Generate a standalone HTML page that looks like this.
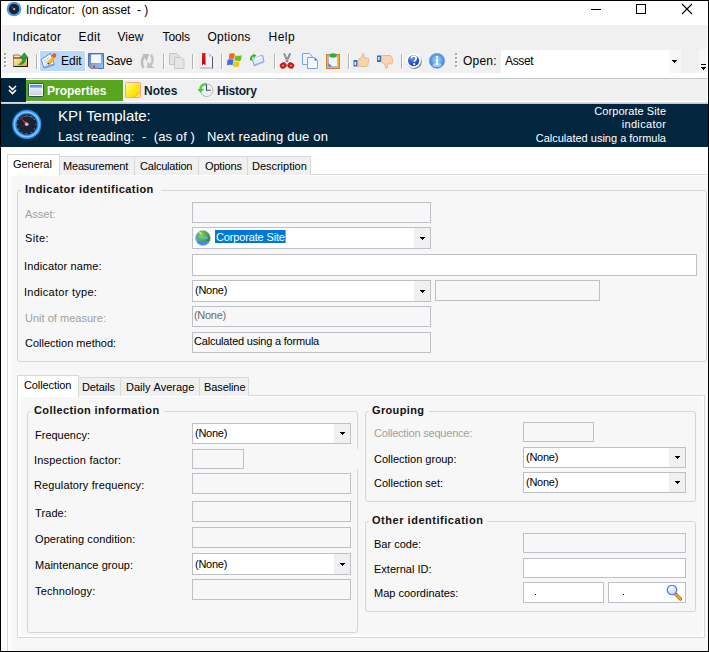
<!DOCTYPE html>
<html><head><meta charset="utf-8"><style>
html,body{margin:0;padding:0;}
body{width:709px;height:652px;overflow:hidden;position:relative;background:#000;font-family:"Liberation Sans",sans-serif;}
.t{position:absolute;white-space:pre;line-height:1;}
.r{position:absolute;box-sizing:border-box;}
svg.r{overflow:visible}
</style></head><body>
<div class="r" style="left:1px;top:1px;width:707px;height:650px;background:#fff;"></div>
<div class="r" style="left:2px;top:25px;width:705px;height:48px;background:#f0f0f0;"></div>
<svg class="r" style="left:6px;top:1px" width="16" height="16" viewBox="0 0 16 16"><circle cx="8" cy="8" r="7.3" fill="#3b9be8"/><circle cx="8" cy="8" r="6" fill="#8fd0ff" opacity=".5"/><circle cx="8" cy="8" r="5.4" fill="#1b2233"/><path d="M4.5 4.8 L8.6 7.6 L7.6 8.6 Z" fill="#e02020"/><circle cx="8.2" cy="8.2" r="1.1" fill="#aab8c8"/></svg>
<div class="t" style="left:26px;top:4.00px;font-size:12px;letter-spacing:-0.05px;">Indicator:&nbsp;&nbsp;(on&nbsp;asset&nbsp;&nbsp;-&nbsp;)</div>
<div class="r" style="left:591px;top:9px;width:10px;height:1px;background:#000;"></div>
<div class="r" style="left:636px;top:4px;width:10px;height:10px;border:1px solid #000;box-sizing:border-box;"></div>
<svg class="r" style="left:681px;top:3px" width="12" height="12" viewBox="0 0 12 12"><path d="M1 1L11 11M11 1L1 11" stroke="#000" stroke-width="1.1"/></svg>
<div class="t" style="left:12.5px;top:31.00px;font-size:12px;letter-spacing:0.3px;">Indicator</div>
<div class="t" style="left:78.5px;top:31.00px;font-size:12px;letter-spacing:0.4px;">Edit</div>
<div class="t" style="left:117.5px;top:31.00px;font-size:12px;">View</div>
<div class="t" style="left:162.5px;top:31.00px;font-size:12px;letter-spacing:-0.1px;">Tools</div>
<div class="t" style="left:207.5px;top:31.00px;font-size:12px;letter-spacing:0.25px;">Options</div>
<div class="t" style="left:268.5px;top:31.00px;font-size:12px;letter-spacing:0.5px;">Help</div>
<div class="r" style="left:5px;top:54px;width:2px;height:2px;background:#fff;"></div>
<div class="r" style="left:4px;top:53px;width:2px;height:2px;background:#a4a4a4;"></div>
<div class="r" style="left:5px;top:58px;width:2px;height:2px;background:#fff;"></div>
<div class="r" style="left:4px;top:57px;width:2px;height:2px;background:#a4a4a4;"></div>
<div class="r" style="left:5px;top:62px;width:2px;height:2px;background:#fff;"></div>
<div class="r" style="left:4px;top:61px;width:2px;height:2px;background:#a4a4a4;"></div>
<div class="r" style="left:5px;top:66px;width:2px;height:2px;background:#fff;"></div>
<div class="r" style="left:4px;top:65px;width:2px;height:2px;background:#a4a4a4;"></div>
<div class="r" style="left:36px;top:54px;width:1px;height:15px;background:#b2b2b2;"></div>
<div class="r" style="left:37px;top:55px;width:1px;height:15px;background:#fff;"></div>
<div class="r" style="left:163px;top:54px;width:1px;height:15px;background:#b2b2b2;"></div>
<div class="r" style="left:164px;top:55px;width:1px;height:15px;background:#fff;"></div>
<div class="r" style="left:192px;top:54px;width:1px;height:15px;background:#b2b2b2;"></div>
<div class="r" style="left:193px;top:55px;width:1px;height:15px;background:#fff;"></div>
<div class="r" style="left:221px;top:54px;width:1px;height:15px;background:#b2b2b2;"></div>
<div class="r" style="left:222px;top:55px;width:1px;height:15px;background:#fff;"></div>
<div class="r" style="left:274px;top:54px;width:1px;height:15px;background:#b2b2b2;"></div>
<div class="r" style="left:275px;top:55px;width:1px;height:15px;background:#fff;"></div>
<div class="r" style="left:348px;top:54px;width:1px;height:15px;background:#b2b2b2;"></div>
<div class="r" style="left:349px;top:55px;width:1px;height:15px;background:#fff;"></div>
<div class="r" style="left:401px;top:54px;width:1px;height:15px;background:#b2b2b2;"></div>
<div class="r" style="left:402px;top:55px;width:1px;height:15px;background:#fff;"></div>
<div class="r" style="left:456px;top:54px;width:2px;height:2px;background:#fff;"></div>
<div class="r" style="left:455px;top:53px;width:2px;height:2px;background:#a8a8a8;"></div>
<div class="r" style="left:456px;top:58px;width:2px;height:2px;background:#fff;"></div>
<div class="r" style="left:455px;top:57px;width:2px;height:2px;background:#a8a8a8;"></div>
<div class="r" style="left:456px;top:62px;width:2px;height:2px;background:#fff;"></div>
<div class="r" style="left:455px;top:61px;width:2px;height:2px;background:#a8a8a8;"></div>
<div class="r" style="left:456px;top:66px;width:2px;height:2px;background:#fff;"></div>
<div class="r" style="left:455px;top:65px;width:2px;height:2px;background:#a8a8a8;"></div>
<div class="r" style="left:39px;top:50px;width:47px;height:22px;background:#bad8f9;border:1px solid #fdfdff;"></div>
<div class="t" style="left:61px;top:55.00px;font-size:12px;">Edit</div>
<div class="t" style="left:106px;top:55.00px;font-size:12px;letter-spacing:-0.35px;">Save</div>
<div class="t" style="left:463px;top:55.00px;font-size:12px;letter-spacing:0.2px;">Open:</div>
<div class="r" style="left:501px;top:50px;width:168px;height:23px;background:#fff;"></div>
<div class="r" style="left:669px;top:50px;width:12px;height:23px;background:#f7f7f7;"></div>
<div class="r" style="left:672px;top:60px;width:5px;height:1px;background:#000;"></div>
<div class="r" style="left:673px;top:61px;width:3px;height:1px;background:#000;"></div>
<div class="r" style="left:674px;top:62px;width:1px;height:1px;background:#000;"></div>
<div class="t" style="left:505px;top:55.00px;font-size:12px;letter-spacing:-0.35px;">Asset</div>
<div class="r" style="left:699px;top:49px;width:8px;height:24px;background:#f7f7f7;"></div>
<div class="r" style="left:701px;top:64px;width:5px;height:1px;background:#000;"></div>
<div class="r" style="left:701px;top:67px;width:5px;height:1px;background:#000;"></div>
<div class="r" style="left:702px;top:68px;width:3px;height:1px;background:#000;"></div>
<div class="r" style="left:703px;top:69px;width:1px;height:1px;background:#000;"></div>
<div class="r" style="left:1px;top:78px;width:25px;height:24px;background:#03263f;"></div>
<div class="r" style="left:26px;top:78px;width:682px;height:1px;background:#c4cace;"></div>
<div class="r" style="left:26px;top:79px;width:681px;height:22px;background:#f0f0f0;"></div>
<div class="r" style="left:26px;top:79px;width:248px;height:1px;background:#fff;"></div>
<div class="r" style="left:26px;top:80px;width:97px;height:21px;background:#58a61e;"></div>
<div class="r" style="left:123px;top:80px;width:1px;height:21px;background:#fafafa;"></div>
<div class="r" style="left:26px;top:101px;width:682px;height:1px;background:#fff;"></div>
<div class="r" style="left:1px;top:102px;width:707px;height:1px;background:#d6dce1;"></div>
<div class="r" style="left:1px;top:103px;width:707px;height:1px;background:#c2cad1;"></div>
<div class="t" style="left:47px;top:85.00px;font-size:12px;font-weight:bold;color:#fff;">Properties</div>
<div class="t" style="left:144px;top:85.00px;font-size:12px;font-weight:bold;color:#0a1f3a;">Notes</div>
<div class="t" style="left:217px;top:85.00px;font-size:12px;font-weight:bold;color:#0a1f3a;letter-spacing:-0.25px;">History</div>
<div class="r" style="left:1px;top:104px;width:707px;height:43px;background:#03263f;"></div>
<div class="t" style="left:58px;top:108.00px;font-size:15px;color:#fff;letter-spacing:-0.05px;">KPI&nbsp;Template:</div>
<div class="t" style="left:58px;top:130.00px;font-size:13px;color:#fff;letter-spacing:0.1px;">Last&nbsp;reading:&nbsp;&nbsp;-&nbsp;&nbsp;(as&nbsp;of&nbsp;)</div>
<div class="t" style="left:207px;top:130.00px;font-size:13px;color:#fff;letter-spacing:0.22px;">Next&nbsp;reading&nbsp;due&nbsp;on</div>
<div class="t" style="right:42.94px;top:106px;font-size:11px;color:#fff;text-align:right;letter-spacing:0.06px">Corporate Site</div>
<div class="t" style="right:42.65px;top:119px;font-size:11px;color:#fff;text-align:right;letter-spacing:0.35px">indicator</div>
<div class="t" style="right:43.00px;top:133px;font-size:11px;color:#fff;text-align:right;letter-spacing:0.0px">Calculated using a formula</div>
<div class="r" style="left:7px;top:174px;width:701px;height:1px;background:#d9d9d9;"></div>
<div class="r" style="left:7px;top:174px;width:1px;height:477px;background:#d9d9d9;"></div>
<div class="r" style="left:11px;top:176px;width:697px;height:475px;background:#f7f7f7;"></div>
<div class="r" style="left:59px;top:156px;width:76px;height:19px;background:#f0f0f0;box-shadow: inset 0 1px 0 #d9d9d9, inset -1px 0 0 #d9d9d9, inset 1px 0 0 #d9d9d9;"></div>
<div class="t" style="left:63px;top:161.00px;font-size:11px;letter-spacing:-0.2px;">Measurement</div>
<div class="r" style="left:134px;top:156px;width:65px;height:19px;background:#f0f0f0;box-shadow: inset 0 1px 0 #d9d9d9, inset -1px 0 0 #d9d9d9, inset 1px 0 0 #d9d9d9;"></div>
<div class="t" style="left:140px;top:161.00px;font-size:11px;letter-spacing:-0.2px;">Calculation</div>
<div class="r" style="left:198px;top:156px;width:50px;height:19px;background:#f0f0f0;box-shadow: inset 0 1px 0 #d9d9d9, inset -1px 0 0 #d9d9d9, inset 1px 0 0 #d9d9d9;"></div>
<div class="t" style="left:205px;top:161.00px;font-size:11px;letter-spacing:-0.15px;">Options</div>
<div class="r" style="left:247px;top:156px;width:64px;height:19px;background:#f0f0f0;box-shadow: inset 0 1px 0 #d9d9d9, inset -1px 0 0 #d9d9d9, inset 1px 0 0 #d9d9d9;"></div>
<div class="t" style="left:252px;top:161.00px;font-size:11px;letter-spacing:-0.02px;">Description</div>
<div class="r" style="left:7px;top:154px;width:53px;height:22px;background:#fff;box-shadow: inset 0 1px 0 #d9d9d9, inset -1px 0 0 #d9d9d9, inset 1px 0 0 #d9d9d9;"></div>
<div class="t" style="left:13px;top:159.00px;font-size:11px;letter-spacing:-0.05px;">General</div>
<div class="r" style="left:17px;top:190px;width:690px;height:172px;box-sizing:border-box;border:1px solid #cfd6dc;border-radius:3px"></div>
<div class="r" style="left:21px;top:190px;width:140px;height:1px;background:#f7f7f7;"></div>
<div class="t" style="left:25px;top:184.00px;font-size:11px;font-weight:bold;color:#111;letter-spacing:0.45px;">Indicator&nbsp;identification</div>
<div class="t" style="left:25px;top:209.00px;font-size:11px;color:#a0a0a0;">Asset:</div>
<div class="t" style="left:25px;top:233.00px;font-size:11px;letter-spacing:0.4px;">Site:</div>
<div class="t" style="left:24px;top:261.00px;font-size:11px;letter-spacing:0.13px;">Indicator&nbsp;name:</div>
<div class="t" style="left:24px;top:287.00px;font-size:11px;letter-spacing:0.27px;">Indicator&nbsp;type:</div>
<div class="t" style="left:25px;top:313.00px;font-size:11px;color:#a0a0a0;letter-spacing:0.02px;">Unit&nbsp;of&nbsp;measure:</div>
<div class="t" style="left:25px;top:338.00px;font-size:11px;">Collection&nbsp;method:</div>
<div class="r" style="left:192px;top:202px;width:239px;height:21px;background:#f7f7f7;box-sizing:border-box;border:1px solid #bdc0c6;"></div>
<div class="r" style="left:192px;top:227px;width:239px;height:22px;background:#fff;box-sizing:border-box;border:1px solid #bdc0c6;"></div>
<div class="r" style="left:414px;top:228px;width:16px;height:20px;background:#f0f0f0;"></div>
<div class="r" style="left:420px;top:237px;width:5px;height:1px;background:#000;"></div>
<div class="r" style="left:421px;top:238px;width:3px;height:1px;background:#000;"></div>
<div class="r" style="left:422px;top:239px;width:1px;height:1px;background:#000;"></div>
<div class="r" style="left:215px;top:230px;width:70px;height:13px;background:#0078d7;"></div>
<div class="r" style="left:285px;top:230px;width:1px;height:13px;background:#ff8c1a;"></div>
<div class="t" style="left:216px;top:232.00px;font-size:11px;color:#fff;letter-spacing:-0.15px;">Corporate&nbsp;Site</div>
<div class="r" style="left:192px;top:254px;width:505px;height:22px;background:#fff;box-sizing:border-box;border:1px solid #bdc0c6;"></div>
<div class="r" style="left:192px;top:280px;width:239px;height:22px;background:#fff;box-sizing:border-box;border:1px solid #bdc0c6;"></div>
<div class="r" style="left:414px;top:281px;width:16px;height:20px;background:#f0f0f0;"></div>
<div class="r" style="left:420px;top:290px;width:5px;height:1px;background:#000;"></div>
<div class="r" style="left:421px;top:291px;width:3px;height:1px;background:#000;"></div>
<div class="r" style="left:422px;top:292px;width:1px;height:1px;background:#000;"></div>
<div class="t" style="left:195px;top:285.00px;font-size:11px;letter-spacing:-0.25px;">(None)</div>
<div class="r" style="left:435px;top:280px;width:165px;height:21px;background:#f7f7f7;box-sizing:border-box;border:1px solid #bdc0c6;"></div>
<div class="r" style="left:192px;top:306px;width:239px;height:21px;background:#f7f7f7;box-sizing:border-box;border:1px solid #bdc0c6;"></div>
<div class="t" style="left:194px;top:310.00px;font-size:11px;color:#6d6d6d;letter-spacing:-0.3px;">(None)</div>
<div class="r" style="left:192px;top:332px;width:239px;height:21px;background:#f7f7f7;box-sizing:border-box;border:1px solid #bdc0c6;"></div>
<div class="t" style="left:194px;top:336.00px;font-size:11px;letter-spacing:-0.2px;">Calculated&nbsp;using&nbsp;a&nbsp;formula</div>
<div class="r" style="left:17px;top:395px;width:688px;height:1px;background:#d9d9d9;"></div>
<div class="r" style="left:17px;top:395px;width:1px;height:243px;background:#d9d9d9;"></div>
<div class="r" style="left:704px;top:395px;width:1px;height:243px;background:#d9d9d9;"></div>
<div class="r" style="left:17px;top:637px;width:688px;height:1px;background:#d9d9d9;"></div>
<div class="r" style="left:18px;top:396px;width:686px;height:241px;background:#fff;"></div>
<div class="r" style="left:21px;top:397px;width:682px;height:238px;background:#f7f7f7;"></div>
<div class="r" style="left:78px;top:377px;width:43px;height:19px;background:#f0f0f0;box-shadow: inset 0 1px 0 #d9d9d9, inset -1px 0 0 #d9d9d9, inset 1px 0 0 #d9d9d9;"></div>
<div class="t" style="left:82px;top:382.00px;font-size:11px;letter-spacing:-0.1px;">Details</div>
<div class="r" style="left:120px;top:377px;width:80px;height:19px;background:#f0f0f0;box-shadow: inset 0 1px 0 #d9d9d9, inset -1px 0 0 #d9d9d9, inset 1px 0 0 #d9d9d9;"></div>
<div class="t" style="left:126px;top:382.00px;font-size:11px;">Daily&nbsp;Average</div>
<div class="r" style="left:199px;top:377px;width:50px;height:19px;background:#f0f0f0;box-shadow: inset 0 1px 0 #d9d9d9, inset -1px 0 0 #d9d9d9, inset 1px 0 0 #d9d9d9;"></div>
<div class="t" style="left:204px;top:382.00px;font-size:11px;letter-spacing:-0.1px;">Baseline</div>
<div class="r" style="left:17px;top:375px;width:62px;height:22px;background:#fff;box-shadow: inset 0 1px 0 #d9d9d9, inset -1px 0 0 #d9d9d9, inset 1px 0 0 #d9d9d9;"></div>
<div class="t" style="left:24px;top:380.00px;font-size:11px;letter-spacing:-0.1px;">Collection</div>
<div class="r" style="left:27px;top:411px;width:331px;height:222px;box-sizing:border-box;border:1px solid #cfd6dc;border-radius:3px"></div>
<div class="r" style="left:31px;top:411px;width:133px;height:1px;background:#f7f7f7;"></div>
<div class="t" style="left:34px;top:405.00px;font-size:11px;font-weight:bold;color:#111;letter-spacing:0.4px;">Collection&nbsp;information</div>
<div class="t" style="left:35px;top:430.00px;font-size:11px;">Frequency:</div>
<div class="t" style="left:34px;top:455.00px;font-size:11px;letter-spacing:0.2px;">Inspection&nbsp;factor:</div>
<div class="t" style="left:34px;top:480.00px;font-size:11px;letter-spacing:0.13px;">Regulatory&nbsp;frequency:</div>
<div class="t" style="left:35px;top:508.00px;font-size:11px;letter-spacing:0.1px;">Trade:</div>
<div class="t" style="left:35px;top:534.00px;font-size:11px;letter-spacing:0.1px;">Operating&nbsp;condition:</div>
<div class="t" style="left:35px;top:560.00px;font-size:11px;letter-spacing:0.05px;">Maintenance&nbsp;group:</div>
<div class="t" style="left:35px;top:586.00px;font-size:11px;letter-spacing:0.15px;">Technology:</div>
<div class="r" style="left:192px;top:423px;width:159px;height:21px;background:#fff;box-sizing:border-box;border:1px solid #bdc0c6;"></div>
<div class="r" style="left:334px;top:424px;width:16px;height:19px;background:#f0f0f0;"></div>
<div class="r" style="left:340px;top:432px;width:5px;height:1px;background:#000;"></div>
<div class="r" style="left:341px;top:433px;width:3px;height:1px;background:#000;"></div>
<div class="r" style="left:342px;top:434px;width:1px;height:1px;background:#000;"></div>
<div class="t" style="left:195px;top:428.00px;font-size:11px;letter-spacing:-0.25px;">(None)</div>
<div class="r" style="left:192px;top:449px;width:52px;height:20px;background:#f7f7f7;box-sizing:border-box;border:1px solid #bdc0c6;"></div>
<div class="r" style="left:192px;top:473px;width:159px;height:21px;background:#f7f7f7;box-sizing:border-box;border:1px solid #bdc0c6;"></div>
<div class="r" style="left:192px;top:501px;width:159px;height:21px;background:#f7f7f7;box-sizing:border-box;border:1px solid #bdc0c6;"></div>
<div class="r" style="left:192px;top:527px;width:159px;height:21px;background:#f7f7f7;box-sizing:border-box;border:1px solid #bdc0c6;"></div>
<div class="r" style="left:192px;top:553px;width:159px;height:22px;background:#fff;box-sizing:border-box;border:1px solid #bdc0c6;"></div>
<div class="r" style="left:334px;top:554px;width:16px;height:20px;background:#f0f0f0;"></div>
<div class="r" style="left:340px;top:563px;width:5px;height:1px;background:#000;"></div>
<div class="r" style="left:341px;top:564px;width:3px;height:1px;background:#000;"></div>
<div class="r" style="left:342px;top:565px;width:1px;height:1px;background:#000;"></div>
<div class="t" style="left:195px;top:559.00px;font-size:11px;letter-spacing:-0.25px;">(None)</div>
<div class="r" style="left:192px;top:579px;width:159px;height:21px;background:#f7f7f7;box-sizing:border-box;border:1px solid #bdc0c6;"></div>
<div class="r" style="left:357px;top:449px;width:1px;height:20px;background:#f7f7f7;"></div>
<div class="r" style="left:365px;top:411px;width:331px;height:91px;box-sizing:border-box;border:1px solid #cfd6dc;border-radius:3px"></div>
<div class="r" style="left:369px;top:411px;width:60px;height:1px;background:#f7f7f7;"></div>
<div class="t" style="left:372px;top:405.00px;font-size:11px;font-weight:bold;color:#111;letter-spacing:0.35px;">Grouping</div>
<div class="t" style="left:374px;top:428.00px;font-size:11px;color:#a0a0a0;letter-spacing:-0.2px;">Collection&nbsp;sequence:</div>
<div class="t" style="left:374px;top:454.00px;font-size:11px;">Collection&nbsp;group:</div>
<div class="t" style="left:374px;top:478.00px;font-size:11px;">Collection&nbsp;set:</div>
<div class="r" style="left:523px;top:422px;width:71px;height:20px;background:#f7f7f7;box-sizing:border-box;border:1px solid #bdc0c6;"></div>
<div class="r" style="left:523px;top:447px;width:163px;height:21px;background:#fff;box-sizing:border-box;border:1px solid #bdc0c6;"></div>
<div class="r" style="left:669px;top:448px;width:16px;height:19px;background:#f0f0f0;"></div>
<div class="r" style="left:675px;top:456px;width:5px;height:1px;background:#000;"></div>
<div class="r" style="left:676px;top:457px;width:3px;height:1px;background:#000;"></div>
<div class="r" style="left:677px;top:458px;width:1px;height:1px;background:#000;"></div>
<div class="t" style="left:526px;top:452.00px;font-size:11px;letter-spacing:-0.25px;">(None)</div>
<div class="r" style="left:523px;top:472px;width:163px;height:21px;background:#fff;box-sizing:border-box;border:1px solid #bdc0c6;"></div>
<div class="r" style="left:669px;top:473px;width:16px;height:19px;background:#f0f0f0;"></div>
<div class="r" style="left:675px;top:481px;width:5px;height:1px;background:#000;"></div>
<div class="r" style="left:676px;top:482px;width:3px;height:1px;background:#000;"></div>
<div class="r" style="left:677px;top:483px;width:1px;height:1px;background:#000;"></div>
<div class="t" style="left:526px;top:477.00px;font-size:11px;letter-spacing:-0.25px;">(None)</div>
<div class="r" style="left:365px;top:521px;width:331px;height:91px;box-sizing:border-box;border:1px solid #cfd6dc;border-radius:3px"></div>
<div class="r" style="left:369px;top:521px;width:118px;height:1px;background:#f7f7f7;"></div>
<div class="t" style="left:372px;top:515.00px;font-size:11px;font-weight:bold;color:#111;letter-spacing:0.53px;">Other&nbsp;identification</div>
<div class="t" style="left:374px;top:539.00px;font-size:11px;">Bar&nbsp;code:</div>
<div class="t" style="left:374px;top:564.00px;font-size:11px;">External&nbsp;ID:</div>
<div class="t" style="left:374px;top:588.00px;font-size:11px;">Map&nbsp;coordinates:</div>
<div class="r" style="left:523px;top:533px;width:163px;height:20px;background:#f7f7f7;box-sizing:border-box;border:1px solid #bdc0c6;"></div>
<div class="r" style="left:523px;top:558px;width:163px;height:20px;background:#fff;box-sizing:border-box;border:1px solid #bdc0c6;"></div>
<div class="r" style="left:523px;top:582px;width:81px;height:21px;background:#fff;box-sizing:border-box;border:1px solid #bdc0c6;"></div>
<div class="r" style="left:608px;top:582px;width:78px;height:21px;background:#fff;box-sizing:border-box;border:1px solid #bdc0c6;"></div>
<div class="r" style="left:535px;top:594px;width:1px;height:1px;background:#000;"></div>
<div class="r" style="left:623px;top:594px;width:1px;height:1px;background:#000;"></div>

<svg class="r" style="left:0;top:0" width="709" height="652" viewBox="0 0 709 652">
<defs>
 <linearGradient id="gRib" x1="0" y1="0" x2="0" y2="1"><stop offset="0" stop-color="#ff1a1a"/><stop offset="1" stop-color="#a80000"/></linearGradient>
 <linearGradient id="gSave" x1="0" y1="0" x2="1" y2="1"><stop offset="0" stop-color="#3f7ff0"/><stop offset="1" stop-color="#8fc8ff"/></linearGradient>
 <linearGradient id="gFold" x1="0" y1="0" x2="1" y2="1"><stop offset="0" stop-color="#fff0a8"/><stop offset=".55" stop-color="#f2cc6a"/><stop offset="1" stop-color="#e59a2a"/></linearGradient>
 <linearGradient id="gWin" x1="0" y1="0" x2="0" y2="1"><stop offset="0" stop-color="#ffffff"/><stop offset="1" stop-color="#c9cad8"/></linearGradient>
 <linearGradient id="gWinT" x1="0" y1="0" x2="0" y2="1"><stop offset="0" stop-color="#1d6ef0"/><stop offset="1" stop-color="#9cc4f4"/></linearGradient>
 <linearGradient id="gNote" x1="0" y1="0" x2="1" y2="1"><stop offset="0" stop-color="#ffffa8"/><stop offset=".5" stop-color="#ffe81a"/><stop offset="1" stop-color="#ffd400"/></linearGradient>
 <radialGradient id="gLens" cx=".4" cy=".35" r=".7"><stop offset="0" stop-color="#ffffff"/><stop offset="1" stop-color="#a9cdf6"/></radialGradient>
 <radialGradient id="gInfo" cx=".5" cy=".45" r=".6"><stop offset="0" stop-color="#a8d8ff"/><stop offset="1" stop-color="#2a78d4"/></radialGradient>
 <radialGradient id="gHelp" cx=".4" cy=".3" r=".75"><stop offset="0" stop-color="#5d8ef0"/><stop offset="1" stop-color="#1238a8"/></radialGradient>
 <radialGradient id="gGlobe" cx=".4" cy=".35" r=".7"><stop offset="0" stop-color="#8fd06a"/><stop offset="1" stop-color="#1d7a2a"/></radialGradient>
</defs>
<!-- folder up -->
<g transform="translate(13,52)">
 <path d="M0.5 3 h6 l0.8 1.2 v10.3 h-6.8z" fill="#f6e6a6" stroke="#8a7a5a" stroke-width="1"/>
 <path d="M0.5 6 h14 v8.5 h-14z" fill="url(#gFold)" stroke="#1a1408" stroke-width="1"/>
 <path d="M0.5 6 h14 M0.5 6 v8.5" stroke="#9a8a60" stroke-width="1"/>
 <path d="M5.5 12.5 C8 11.5 9.8 9 9.6 5.5 H7.3 L11.3 0.8 L15 5.5 H12.8 C12.8 10 10.5 13 5.5 12.5z" fill="#22a830" stroke="#0c6a18" stroke-width=".5"/>
</g>
<!-- edit icon -->
<g transform="translate(41,53)">
 <path d="M0.3 6.5 L9.5 0.3 L13.3 11.8 L3 15.2 Z" fill="#f6f9ff" stroke="#6288e2" stroke-width="1"/>
 <path d="M3 15.2 L13.3 11.8 L12.9 10.4 L2.5 13.8 Z" fill="#7f9fe8"/>
 <path d="M3 7.8 L8.3 4.6 M3.7 9.8 L9.4 6.5 M4.3 11.8 L10.4 8.5" stroke="#a9c0ee" stroke-width="1"/>
 <path d="M6.6 9.4 L11.6 2.2 L14.4 4.1 L9.2 11.2 Z" fill="#f7c318"/>
 <path d="M9.2 11.2 L14.4 4.1 L13.6 3.5 L8.4 10.6 Z" fill="#e99a10"/>
 <path d="M6.6 9.4 L9.2 11.2 L6.8 11.6 Z" fill="#3a2a1a"/>
 <circle cx="13.2" cy="2.4" r="2.1" fill="#ea5232"/>
</g>
<!-- save -->
<g transform="translate(88,53)">
 <path d="M0.5 0.5 H15.5 V15.5 H3 L0.5 13 Z" fill="url(#gSave)" stroke="#6a62b8" stroke-width="1"/>
 <rect x="3" y="1.5" width="10" height="8.5" fill="#f4f6ff"/>
 <rect x="4" y="11" width="6" height="4.5" fill="#a8a8b0"/>
 <rect x="5.5" y="12.5" width="1.2" height="2.5" fill="#444"/>
</g>
<!-- refresh disabled -->
<g transform="translate(138,51)">
 <path d="M5.5 16.8 C3.2 13 3.3 8 6.5 5" stroke="#bdbdbd" stroke-width="2.6" fill="none"/>
 <path d="M4 3 L11.2 3 L8.6 10.2 Z" fill="#bdbdbd"/>
 <path d="M13 3.8 C15.5 7.5 15 12 11.5 15" stroke="#c2c2c2" stroke-width="2.6" fill="none"/>
 <path d="M9.5 10.5 L16.2 17 L8.8 17 Z" fill="#c2c2c2"/>
</g>
<!-- copy disabled -->
<g transform="translate(169,53)">
 <path d="M0.5 0.5 H7.5 L10 3 V11.5 H0.5 Z" fill="#e3e3e3" stroke="#c6c6c6"/>
 <path d="M5.5 4.5 H12.5 L15 7 V15.5 H5.5 Z" fill="#e6e6e6" stroke="#c6c6c6"/>
</g>
<!-- bookmark doc -->
<g transform="translate(196,51)">
 <path d="M4 2 H13 L16.5 5.5 V17.5 H4 Z" fill="#f0f3f8"/>
 <path d="M4 2.5 H12.5 M4 2 V17.5" stroke="#dfe5ee" stroke-width="1"/>
 <path d="M4 17 H16.5" stroke="#a49cc8" stroke-width="1"/>
 <path d="M16.5 5.5 V17.5" stroke="#5c5c5c" stroke-width="1"/>
 <path d="M13 2 L16.5 5.5 H13 Z" fill="#a8c8ec"/>
 <path d="M6 2 H9.5 V14.5 L7.75 12.8 L6 14.5 Z" fill="url(#gRib)"/>
</g>
<!-- windows logo -->
<g transform="translate(224,51)">
 <path d="M5.3 2.8 C6.5 2.2 8.5 2 10.9 2.8 L10 8.2 C8 7.5 6.5 7.6 4.8 8.2 Z" fill="#f26a1e"/>
 <path d="M11.3 4.5 C13 5 15 5 17.7 4.2 L16.8 9.5 C14.5 10.3 12.5 10 10.5 9.6 Z" fill="#6cc018"/>
 <path d="M3.5 8.8 C5.3 8.2 7.3 8.1 9.6 8.8 L8.6 14.2 C6.5 13.6 4.8 13.6 3 14.3 Z" fill="#3c6cf0"/>
 <path d="M9.9 10.5 C11.7 11 13.5 11 15.5 10.3 L14.6 15.6 C12.7 16.3 11 16.2 9 15.6 Z" fill="#f0c410"/>
</g>
<!-- mail -->
<g transform="translate(246,51)">
 <path d="M6.5 8.3 L16.5 4 L18 10.9 L8.2 14.8 Z" fill="#e4eefc" stroke="#7c9fe2" stroke-width="1"/>
 <path d="M8.2 14.8 L18 10.9 L17.7 9.8 L7.8 13.7 Z" fill="#9ab8ec"/>
 <path d="M6.8 8.4 L12.5 9.5 L16.3 4.2" fill="#fff" stroke="#c8d8f4" stroke-width=".6"/>
 <path d="M14 5 L16 4.3 L16.2 5.3 Z" fill="#e8a040"/>
 <path d="M4.2 9.5 C3.5 7 4.6 4.3 7.5 3.6 L7.2 2.4 L10.3 4.6 L7.6 7 L7.5 5.7 C6 6.2 5.5 7.6 6.5 9.6 Z" fill="#2cb82c"/>
</g>
<!-- scissors -->
<g transform="translate(277,51)">
 <path d="M7 2.5 L10.8 11 M13.2 2.5 L9.2 11" stroke="#6a6a6a" stroke-width="1.8"/>
 <path d="M7 2.8 L10.6 10.5 M13.2 2.8 L9.4 10.5" stroke="#d8d8d8" stroke-width=".5"/>
 <ellipse cx="6.2" cy="14.5" rx="3.2" ry="2.7" transform="rotate(-25 6.2 14.5)" fill="#dc1c1c" stroke="#8a1010" stroke-width=".6"/>
 <ellipse cx="13.8" cy="14.5" rx="3.2" ry="2.7" transform="rotate(25 13.8 14.5)" fill="#dc1c1c" stroke="#8a1010" stroke-width=".6"/>
 <circle cx="6" cy="14.6" r=".9" fill="#c8c8c8"/>
 <circle cx="14" cy="14.6" r=".9" fill="#c8c8c8"/>
</g>
<!-- copy -->
<g transform="translate(302,53)">
 <path d="M0.5 0.5 H7.5 L10 3 V11.5 H0.5 Z" fill="#eef4fd" stroke="#78a4e4"/>
 <path d="M5.5 4.5 H12.5 L15.5 7.5 V15.5 H5.5 Z" fill="#f2f6fd" stroke="#78a4e4"/>
 <path d="M12.5 4.5 V7.5 H15.5 Z" fill="#3c78d8"/>
</g>
<!-- paste -->
<g transform="translate(326,53)">
 <rect x="0.5" y="1.5" width="13" height="14" fill="#f6b23a" stroke="#d87a2a"/>
 <rect x="2.5" y="3.5" width="9" height="10" fill="#eef5ff" stroke="#9ab8e0" stroke-width=".8"/>
 <ellipse cx="7" cy="2.5" rx="3.5" ry="2.2" fill="#2fb043"/>
 <path d="M2.5 10 V13.5 H6 Z" fill="#3c78d8"/>
</g>
<!-- thumbs up -->
<g transform="translate(353,53)">
 <rect x="0.5" y="7" width="4" height="6.5" fill="#3f6fc0"/>
 <rect x="1.5" y="9" width="1.5" height="3" fill="#cfe"/>
 <path d="M5 7 L8.5 4 L9.5 0.5 C11 0.5 11.5 2 10.8 5 H15 C16.5 5.5 16.5 7 15.5 7.5 C16.5 8.5 16 10 15 10.3 C15.5 11.5 14.8 12.8 13.5 13.5 H5 Z" fill="#f7d3ae" stroke="#e0a878" stroke-width=".7"/>
</g>
<!-- thumbs down -->
<g transform="translate(377,55)">
 <rect x="0" y="0.5" width="4" height="6.5" fill="#3f6fc0"/>
 <rect x="1" y="2" width="1.5" height="3" fill="#cfe"/>
 <path d="M4.5 0.5 H13 C14.5 1 15.5 2.5 15 3.8 C16 4.3 16.3 5.8 15.5 6.5 C16 7.5 15.5 8.5 14.5 8.8 H10.3 C11 11.5 10.5 13.5 9 13.5 L8 10 L4.5 7 Z" fill="#f7d3ae" stroke="#e0a878" stroke-width=".7"/>
</g>
<!-- help -->
<g transform="translate(406,53)">
 <circle cx="8.5" cy="8.7" r="7.2" fill="#1a1f30" opacity=".55"/>
 <circle cx="7.6" cy="7.6" r="7.4" fill="#fff"/>
 <circle cx="7.6" cy="7.6" r="5.6" fill="url(#gHelp)"/>
 <path d="M5.4 5.6 C5.4 3.8 6.6 3.2 7.7 3.2 C9.2 3.2 10.2 4.1 10.2 5.4 C10.2 7 8.3 7.2 8.3 8.8" fill="none" stroke="#fff" stroke-width="1.7"/>
 <rect x="7.3" y="10.2" width="1.9" height="1.9" fill="#fff"/>
</g>
<!-- info -->
<g transform="translate(429,53)">
 <ellipse cx="8" cy="7.8" rx="7.6" ry="7.4" fill="url(#gInfo)" stroke="#4a8ad8" stroke-width=".6"/>
 <ellipse cx="8" cy="12" rx="4.5" ry="2" fill="#d8f0ff" opacity=".6"/>
 <rect x="7.1" y="3" width="1.9" height="1.8" fill="#fff"/>
 <rect x="7.1" y="5.6" width="1.9" height="6.4" fill="#fff"/>
</g>
<!-- properties window icon -->
<g transform="translate(28,83)">
 <rect x="0.5" y="0.5" width="15" height="13" rx="1" fill="url(#gWin)" stroke="#205a50" stroke-width="1"/>
 <rect x="1.5" y="1.5" width="13" height="3.5" fill="url(#gWinT)"/>
 <rect x="1.5" y="1.5" width="13" height="11" fill="none" stroke="#fff" stroke-width=".8"/>
</g>
<!-- notes icon -->
<g transform="translate(125,82)">
 <rect x="0.5" y="0.5" width="15" height="15" rx="1" fill="url(#gNote)" stroke="#f4a488" stroke-width="1"/>
 <path d="M9.5 15 L15 9.5 V15 Z" fill="#ffe84a"/>
 <path d="M9.5 15 L15 9.5" stroke="#f0a010" stroke-width="1"/>
</g>
<!-- history icon -->
<g transform="translate(194,80)">
 <circle cx="12.7" cy="10.2" r="6.3" fill="#eef2f4" stroke="#b4b8bc" stroke-width="1"/>
 <path d="M12.5 4.3 V10.3 H16.8" stroke="#3e5060" stroke-width="1.1" fill="none"/>
 <path d="M3.3 9 H10.3 L6.6 13 Z" fill="#4cd040"/>
 <path d="M6.5 9.5 C6.5 6.5 8.5 4.3 12 4" stroke="#4cd040" stroke-width="2.4" fill="none"/>
</g>
<!-- double chevron -->
<g transform="translate(8,85)">
 <path d="M1 1 L4.5 4.5 L8 1 M1 5 L4.5 8.5 L8 5" stroke="#fff" stroke-width="1.6" fill="none"/>
</g>
<!-- gauge -->
<g transform="translate(11,108)">
 <circle cx="15.8" cy="16.4" r="14.6" fill="#2c8cf0"/>
 <circle cx="15.8" cy="16.4" r="12.4" fill="none" stroke="#9ad8ff" stroke-width="1.6" opacity=".75"/>
 <circle cx="15.8" cy="16.4" r="10.4" fill="#1a2235"/>
 <path d="M9 10.5 C12 7.5 19.5 7.5 22.5 10.5" stroke="#5a6478" stroke-width="1.2" fill="none" opacity=".7"/>
 <g fill="#9aa3b0">
  <circle cx="15.5" cy="7.3" r=".6"/><circle cx="20" cy="8.5" r=".6"/><circle cx="23.5" cy="11.5" r=".6"/><circle cx="24.8" cy="16.5" r=".6"/><circle cx="23.5" cy="21" r=".6"/><circle cx="20" cy="24.5" r=".6"/><circle cx="15.5" cy="25.7" r=".6"/><circle cx="11" cy="24.5" r=".6"/><circle cx="7.5" cy="21" r=".6"/><circle cx="6.2" cy="16.5" r=".6"/><circle cx="7.5" cy="11.5" r=".6"/>
 </g>
 <path d="M9 9.5 L16.5 15 L14.8 17 Z" fill="#ee1c1c"/>
 <circle cx="15.7" cy="16.3" r="1.8" fill="#b8c4d0"/>
</g>
<!-- globe -->
<g transform="translate(195,230)">
 <clipPath id="cpG"><circle cx="8" cy="8" r="7.5"/></clipPath>
 <circle cx="8" cy="8" r="7.5" fill="url(#gGlobe)"/>
 <g clip-path="url(#cpG)">
  <path d="M0 6.5 C2 6 3.5 7.5 4.5 9.5 C5 11 4 12.5 2 12 L0 11Z" fill="#4aa0f0"/>
  <path d="M1 13 C4 12 6 12.5 8 11.5 C10 10.5 12 11 16 12 V16 H0Z" fill="#3d8ce8"/>
  <path d="M9 6.5 C10.5 7 12 6 13 7.5 C12 9.5 10 9.5 8.5 8.5Z" fill="#5fb0f0"/>
  <path d="M4 2 C5.5 1.5 7 2.5 7 4 C6 5 4.5 4.5 4 2Z" fill="#b8e890"/>
 </g>
 <circle cx="8" cy="8" r="7.5" fill="none" stroke="#9cc8f0" stroke-width=".7"/>
</g>
<!-- magnifier -->
<g transform="translate(666,584)">
 <path d="M9 9.5 L14.5 15" stroke="#a86a10" stroke-width="3.2" stroke-linecap="round"/>
 <path d="M9 9.5 L14.5 15" stroke="#eaa838" stroke-width="1.8" stroke-linecap="round"/>
 <circle cx="6" cy="6" r="4.8" fill="url(#gLens)" stroke="#4d6fe0" stroke-width="1.1"/>
</g>
</svg>

</body></html>
